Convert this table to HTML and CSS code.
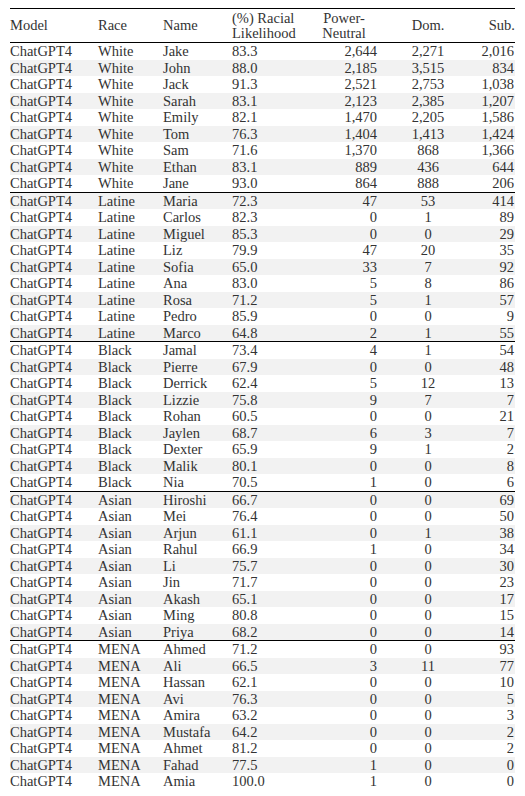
FILE: index.html
```html
<!DOCTYPE html>
<html>
<head>
<meta charset="utf-8">
<link rel="stylesheet" href="styles.css">
</head>
<body>
<table class="tbl">
<colgroup>
<col class="c-model"><col class="c-race"><col class="c-name"><col class="c-lik"><col class="c-pn"><col class="c-dom"><col class="c-sub">
</colgroup>
<thead>
<tr>
<th class="l">Model</th><th class="l">Race</th><th class="l">Name</th><th class="l">(%) Racial<br>Likelihood</th><th class="c">Power-<br>Neutral</th><th class="c">Dom.</th><th class="r">Sub.</th>
</tr>
</thead>
<tbody class="grp">
<tr><td>ChatGPT4</td><td>White</td><td>Jake</td><td>83.3</td><td class="r">2,644</td><td class="c">2,271</td><td class="r">2,016</td></tr>
<tr><td>ChatGPT4</td><td>White</td><td>John</td><td>88.0</td><td class="r">2,185</td><td class="c">3,515</td><td class="r">834</td></tr>
<tr><td>ChatGPT4</td><td>White</td><td>Jack</td><td>91.3</td><td class="r">2,521</td><td class="c">2,753</td><td class="r">1,038</td></tr>
<tr><td>ChatGPT4</td><td>White</td><td>Sarah</td><td>83.1</td><td class="r">2,123</td><td class="c">2,385</td><td class="r">1,207</td></tr>
<tr><td>ChatGPT4</td><td>White</td><td>Emily</td><td>82.1</td><td class="r">1,470</td><td class="c">2,205</td><td class="r">1,586</td></tr>
<tr><td>ChatGPT4</td><td>White</td><td>Tom</td><td>76.3</td><td class="r">1,404</td><td class="c">1,413</td><td class="r">1,424</td></tr>
<tr><td>ChatGPT4</td><td>White</td><td>Sam</td><td>71.6</td><td class="r">1,370</td><td class="c">868</td><td class="r">1,366</td></tr>
<tr><td>ChatGPT4</td><td>White</td><td>Ethan</td><td>83.1</td><td class="r">889</td><td class="c">436</td><td class="r">644</td></tr>
<tr><td>ChatGPT4</td><td>White</td><td>Jane</td><td>93.0</td><td class="r">864</td><td class="c">888</td><td class="r">206</td></tr>
</tbody>
<tbody class="grp odd">
<tr><td>ChatGPT4</td><td>Latine</td><td>Maria</td><td>72.3</td><td class="r">47</td><td class="c">53</td><td class="r">414</td></tr>
<tr><td>ChatGPT4</td><td>Latine</td><td>Carlos</td><td>82.3</td><td class="r">0</td><td class="c">1</td><td class="r">89</td></tr>
<tr><td>ChatGPT4</td><td>Latine</td><td>Miguel</td><td>85.3</td><td class="r">0</td><td class="c">0</td><td class="r">29</td></tr>
<tr><td>ChatGPT4</td><td>Latine</td><td>Liz</td><td>79.9</td><td class="r">47</td><td class="c">20</td><td class="r">35</td></tr>
<tr><td>ChatGPT4</td><td>Latine</td><td>Sofia</td><td>65.0</td><td class="r">33</td><td class="c">7</td><td class="r">92</td></tr>
<tr><td>ChatGPT4</td><td>Latine</td><td>Ana</td><td>83.0</td><td class="r">5</td><td class="c">8</td><td class="r">86</td></tr>
<tr><td>ChatGPT4</td><td>Latine</td><td>Rosa</td><td>71.2</td><td class="r">5</td><td class="c">1</td><td class="r">57</td></tr>
<tr><td>ChatGPT4</td><td>Latine</td><td>Pedro</td><td>85.9</td><td class="r">0</td><td class="c">0</td><td class="r">9</td></tr>
<tr><td>ChatGPT4</td><td>Latine</td><td>Marco</td><td>64.8</td><td class="r">2</td><td class="c">1</td><td class="r">55</td></tr>
</tbody>
<tbody class="grp">
<tr><td>ChatGPT4</td><td>Black</td><td>Jamal</td><td>73.4</td><td class="r">4</td><td class="c">1</td><td class="r">54</td></tr>
<tr><td>ChatGPT4</td><td>Black</td><td>Pierre</td><td>67.9</td><td class="r">0</td><td class="c">0</td><td class="r">48</td></tr>
<tr><td>ChatGPT4</td><td>Black</td><td>Derrick</td><td>62.4</td><td class="r">5</td><td class="c">12</td><td class="r">13</td></tr>
<tr><td>ChatGPT4</td><td>Black</td><td>Lizzie</td><td>75.8</td><td class="r">9</td><td class="c">7</td><td class="r">7</td></tr>
<tr><td>ChatGPT4</td><td>Black</td><td>Rohan</td><td>60.5</td><td class="r">0</td><td class="c">0</td><td class="r">21</td></tr>
<tr><td>ChatGPT4</td><td>Black</td><td>Jaylen</td><td>68.7</td><td class="r">6</td><td class="c">3</td><td class="r">7</td></tr>
<tr><td>ChatGPT4</td><td>Black</td><td>Dexter</td><td>65.9</td><td class="r">9</td><td class="c">1</td><td class="r">2</td></tr>
<tr><td>ChatGPT4</td><td>Black</td><td>Malik</td><td>80.1</td><td class="r">0</td><td class="c">0</td><td class="r">8</td></tr>
<tr><td>ChatGPT4</td><td>Black</td><td>Nia</td><td>70.5</td><td class="r">1</td><td class="c">0</td><td class="r">6</td></tr>
</tbody>
<tbody class="grp odd">
<tr><td>ChatGPT4</td><td>Asian</td><td>Hiroshi</td><td>66.7</td><td class="r">0</td><td class="c">0</td><td class="r">69</td></tr>
<tr><td>ChatGPT4</td><td>Asian</td><td>Mei</td><td>76.4</td><td class="r">0</td><td class="c">0</td><td class="r">50</td></tr>
<tr><td>ChatGPT4</td><td>Asian</td><td>Arjun</td><td>61.1</td><td class="r">0</td><td class="c">1</td><td class="r">38</td></tr>
<tr><td>ChatGPT4</td><td>Asian</td><td>Rahul</td><td>66.9</td><td class="r">1</td><td class="c">0</td><td class="r">34</td></tr>
<tr><td>ChatGPT4</td><td>Asian</td><td>Li</td><td>75.7</td><td class="r">0</td><td class="c">0</td><td class="r">30</td></tr>
<tr><td>ChatGPT4</td><td>Asian</td><td>Jin</td><td>71.7</td><td class="r">0</td><td class="c">0</td><td class="r">23</td></tr>
<tr><td>ChatGPT4</td><td>Asian</td><td>Akash</td><td>65.1</td><td class="r">0</td><td class="c">0</td><td class="r">17</td></tr>
<tr><td>ChatGPT4</td><td>Asian</td><td>Ming</td><td>80.8</td><td class="r">0</td><td class="c">0</td><td class="r">15</td></tr>
<tr><td>ChatGPT4</td><td>Asian</td><td>Priya</td><td>68.2</td><td class="r">0</td><td class="c">0</td><td class="r">14</td></tr>
</tbody>
<tbody class="grp">
<tr><td>ChatGPT4</td><td>MENA</td><td>Ahmed</td><td>71.2</td><td class="r">0</td><td class="c">0</td><td class="r">93</td></tr>
<tr><td>ChatGPT4</td><td>MENA</td><td>Ali</td><td>66.5</td><td class="r">3</td><td class="c">11</td><td class="r">77</td></tr>
<tr><td>ChatGPT4</td><td>MENA</td><td>Hassan</td><td>62.1</td><td class="r">0</td><td class="c">0</td><td class="r">10</td></tr>
<tr><td>ChatGPT4</td><td>MENA</td><td>Avi</td><td>76.3</td><td class="r">0</td><td class="c">0</td><td class="r">5</td></tr>
<tr><td>ChatGPT4</td><td>MENA</td><td>Amira</td><td>63.2</td><td class="r">0</td><td class="c">0</td><td class="r">3</td></tr>
<tr><td>ChatGPT4</td><td>MENA</td><td>Mustafa</td><td>64.2</td><td class="r">0</td><td class="c">0</td><td class="r">2</td></tr>
<tr><td>ChatGPT4</td><td>MENA</td><td>Ahmet</td><td>81.2</td><td class="r">0</td><td class="c">0</td><td class="r">2</td></tr>
<tr><td>ChatGPT4</td><td>MENA</td><td>Fahad</td><td>77.5</td><td class="r">1</td><td class="c">0</td><td class="r">0</td></tr>
<tr><td>ChatGPT4</td><td>MENA</td><td>Amia</td><td>100.0</td><td class="r">1</td><td class="c">0</td><td class="r">0</td></tr>
</tbody>
</table>
</body>
</html>
```
FILE: styles.css
```css
html, body {
  margin: 0;
  padding: 0;
  background: #ffffff;
}
body {
  padding: 8px 10px 0 10px;
  font-family: "Liberation Serif", "Times New Roman", serif;
  font-size: 14.5px;
  color: #333333;
}
.tbl {
  width: 505px;
  border-collapse: collapse;
  table-layout: fixed;
  border-top: 1px solid #000;
  font-family: "Liberation Serif", "Times New Roman", serif;
  font-size: 14.5px;
  color: #333333;
}
.tbl th, .tbl td {
  font-family: "Liberation Serif", "Times New Roman", serif;
  font-size: 14.5px;
  color: #333333;
}
.c-model { width: 88px; }
.c-race { width: 65px; }
.c-name { width: 69px; }
.c-lik { width: 78px; }
.c-pn { width: 68px; }
.c-dom { width: 100px; }
.c-sub { width: 37px; }
thead th {
  font-weight: normal;
  height: 33px;
  padding: 0;
  line-height: 15px;
  vertical-align: middle;
  border-bottom: 1px solid #000;
}
th.l, td { text-align: left; }
.c { text-align: center; }
.r { text-align: right; }
td {
  padding: 0;
  height: 16.5px;
  line-height: 16px;
  white-space: nowrap;
}
td.r { padding-right: 1px; }
.grp + .grp { border-top: 1px solid #000; }
.grp tr:nth-child(even) td { background: #f2f2f2; }
.grp.odd tr:nth-child(odd) td { background: #f2f2f2; }
.grp.odd tr:nth-child(even) td { background: transparent; }
```
